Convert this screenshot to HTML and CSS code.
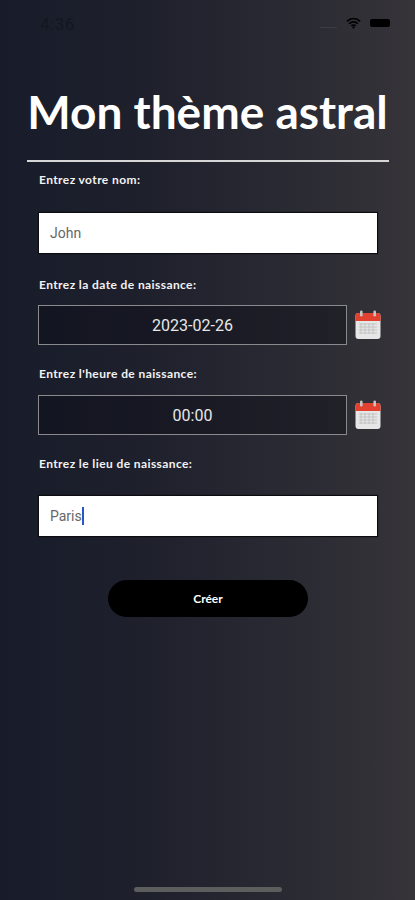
FILE: index.html
```html
<!DOCTYPE html>
<html lang="fr">
<head>
  <meta charset="UTF-8" />
  <meta name="viewport" content="width=device-width, initial-scale=1" />
  <title>Mon thème astral</title>
  <link rel="stylesheet" href="styles.css">
</head>
<body>
  <svg width="0" height="0" class="defs">
    <symbol id="calendar" viewBox="0 0 26 30">
      <rect x="0.5" y="3" width="25" height="26" rx="3" fill="#e6e6e6"/>
      <path d="M0.5 11V6a3 3 0 0 1 3-3h19a3 3 0 0 1 3 3v5z" fill="#e2412f"/>
      <rect x="5" y="0.5" width="2.6" height="6" rx="1.3" fill="#c4c4c4"/>
      <rect x="18.4" y="0.5" width="2.6" height="6" rx="1.3" fill="#c4c4c4"/>
      <path d="M4 14h18M4 17h18M4 20h18M4 23h18M6 13v11M10 13v11M14 13v11M18 13v11" stroke="#c2c2c2" stroke-width="1" fill="none"/>
    </symbol>
  </svg>

  <div class="status-bar">
    <span class="time">4:36</span>
    <div class="status-icons">
      <span class="signal"></span>
      <svg class="wifi" width="15" height="12" viewBox="0 0 17 13">
        <path d="M1 4.6a10.6 10.6 0 0 1 15 0M3.5 7.3a7 7 0 0 1 10 0M6 9.9a3.4 3.4 0 0 1 5 0" stroke="#000" stroke-width="1.8" fill="none"/>
        <circle cx="8.5" cy="11.6" r="1.3" fill="#000"/>
      </svg>
      <span class="battery"></span>
    </div>
  </div>

  <h1 class="title">Mon thème astral</h1>
  <div class="divider"></div>

  <form class="form">
    <label class="label label-first">Entrez votre nom:</label>
    <div class="text-field">John</div>

    <label class="label label-date">Entrez la date de naissance:</label>
    <div class="picker-row">
      <div class="picker">2023-02-26</div>
      <svg class="cal-icon"><use href="#calendar"/></svg>
    </div>

    <label class="label label-time">Entrez l'heure de naissance:</label>
    <div class="picker-row">
      <div class="picker">00:00</div>
      <svg class="cal-icon"><use href="#calendar"/></svg>
    </div>

    <label class="label label-place">Entrez le lieu de naissance:</label>
    <div class="text-field">Paris<span class="caret"></span></div>

    <button type="button" class="create-btn">Créer</button>
  </form>

  <div class="home-bar"></div>
</body>
</html>
```

FILE: styles.css
```css
* { box-sizing: border-box; }
body {
  margin: 0;
  width: 415px;
  height: 900px;
  overflow: hidden;
  position: relative;
  background: linear-gradient(90deg, #181c2a 0%, #1e202c 35%, #2a2a33 70%, #363439 100%);
  font-family: 'Roboto', sans-serif;
  color: #fff;
}
.defs { position: absolute; }
.status-bar {
  height: 48px;
  padding: 13px 25px 0 40px;
  display: flex;
  justify-content: space-between;
  align-items: flex-start;
}
.time {
  font-size: 17px;
  line-height: 22px;
  color: #14161f;
  letter-spacing: 0.5px;
}
.status-icons {
  display: flex;
  align-items: center;
  gap: 9px;
  margin-top: 4px;
}
.signal {
  width: 17px;
  height: 1px;
  margin-top: 8px;
  background: #3c3c44;
}
.battery {
  width: 20px;
  height: 8px;
  border-radius: 2px;
  background: #000;
}
.title {
  margin: 36px 0 0;
  text-align: center;
  font-family: 'Lato', sans-serif;
  font-weight: bold;
  font-size: 46px;
  line-height: 56px;
  white-space: nowrap;
  color: #fff;
}
.divider {
  height: 2px;
  margin: 20px 26px 0 27px;
  background: #d6d6d6;
}
.form {
  display: flex;
  flex-direction: column;
  padding-left: 39px;
}
.label {
  font-family: 'Lato', sans-serif;
  font-weight: bold;
  font-size: 12px;
  letter-spacing: 0.4px;
  line-height: 14px;
  color: #f2f2f2;
}
.label-first { margin-top: 11px; }
.label-date { margin-top: 25px; }
.label-time { margin-top: 22px; }
.label-place { margin-top: 22px; }
.text-field {
  width: 338px;
  height: 40px;
  margin-top: 26px;
  padding-left: 11px;
  display: flex;
  align-items: center;
  background: #fff;
  font-size: 14px;
  color: #666;
  box-shadow: 0 0 1px 1px #0c0c10;
}
.label-place + .text-field { margin-top: 25px; }
.caret {
  width: 2px;
  height: 18px;
  background: #2a55c8;
}
.picker-row {
  display: flex;
  align-items: center;
  gap: 8px;
  margin: 13px 0 0 -1px;
}
.label-time + .picker-row { margin-top: 14px; }
.picker {
  width: 309px;
  height: 40px;
  border: 1px solid #8a8a8e;
  background: rgba(8, 8, 16, 0.35);
  display: flex;
  align-items: center;
  justify-content: center;
  font-size: 16px;
  color: #e8e8e8;
}
.cal-icon {
  width: 26px;
  height: 30px;
}
.create-btn {
  width: 200px;
  height: 37px;
  margin: 44px 0 0 69px;
  border: none;
  border-radius: 19px;
  background: #000;
  color: #fff;
  font-family: 'Lato', sans-serif;
  font-weight: bold;
  font-size: 12px;
}
.home-bar {
  position: absolute;
  left: 134px;
  top: 887px;
  width: 148px;
  height: 5px;
  border-radius: 3px;
  background: #5c5e5e;
}
```
